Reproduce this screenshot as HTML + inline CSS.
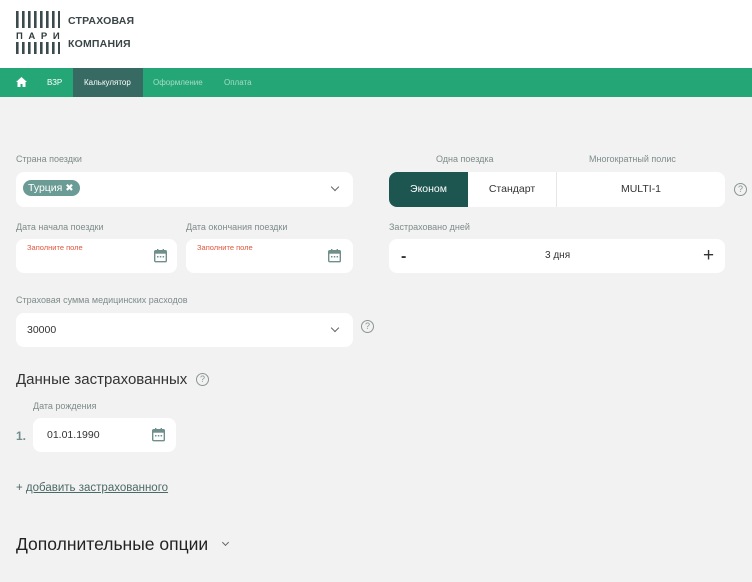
<!DOCTYPE html>
<html><head><meta charset="utf-8"><style>
*{box-sizing:border-box;margin:0;padding:0}
body{width:752px;height:582px;overflow:hidden;background:#f2f2f2;font-family:"Liberation Sans","DejaVu Sans",sans-serif;position:relative;color:#333}
.a{position:absolute}
.hdr{left:0;top:0;width:752px;height:68px;background:#fff}
.nav{left:0;top:68px;width:752px;height:29px;background:#25a676}
.nav span{position:absolute;top:10px;font-size:8px;color:#fff}
.lbl{font-size:9px;color:#7d8c8a}
.box{background:#fff;border-radius:8px}
.err{font-size:7.5px;color:#e0573e}
.q{width:13px;height:13px;border:1.2px solid #8a9593;border-radius:50%;font-size:9px;color:#8a9593;text-align:center;line-height:11px}
.chev{width:6px;height:6px;border-right:1.2px solid #666;border-bottom:1.2px solid #666;transform:rotate(45deg)}
</style></head><body>
<div class="a hdr"></div>
<svg class="a" style="left:16px;top:11px" width="44" height="43">
<g fill="#3b4a4d">
<rect x="0" y="0" width="2.6" height="17"/><rect x="6" y="0" width="2.6" height="17"/><rect x="12" y="0" width="2.6" height="17"/><rect x="18" y="0" width="2.6" height="17"/><rect x="24" y="0" width="2.6" height="17"/><rect x="30" y="0" width="2.6" height="17"/><rect x="36" y="0" width="2.6" height="17"/><rect x="42" y="0" width="2" height="17"/>
<rect x="0" y="31" width="2.6" height="12"/><rect x="6" y="31" width="2.6" height="12"/><rect x="12" y="31" width="2.6" height="12"/><rect x="18" y="31" width="2.6" height="12"/><rect x="24" y="31" width="2.6" height="12"/><rect x="30" y="31" width="2.6" height="12"/><rect x="36" y="31" width="2.6" height="12"/><rect x="42" y="31" width="2" height="12"/>
</g>
<text x="0" y="28" font-size="9.5" font-weight="bold" fill="#2f3b3e" letter-spacing="5.6" font-family="Liberation Sans">ПАРИ</text>
</svg>
<div class="a" style="left:68px;top:15px;font-size:10.5px;font-weight:bold;color:#3b4447;letter-spacing:.2px">СТРАХОВАЯ</div>
<div class="a" style="left:68px;top:38px;font-size:10.5px;font-weight:bold;color:#3b4447;letter-spacing:.2px">КОМПАНИЯ</div>
<div class="a nav">
<svg style="position:absolute;left:16px;top:9px" width="11" height="10"><path d="M5.5 0L0 5h1.5v5h3V7h2v3h3V5H11z" fill="#fff"/></svg>
<span style="left:47px">ВЗР</span>
<div style="position:absolute;left:73px;top:0;width:70px;height:29px;background:#366a62"></div>
<span style="left:84px">Калькулятор</span>
<span style="left:153px;color:#a6dcc6">Оформление</span>
<span style="left:224px;color:#a6dcc6">Оплата</span>
</div>

<div class="a lbl" style="left:16px;top:154px">Страна поездки</div>
<div class="a box" style="left:16px;top:172px;width:337px;height:35px"></div>
<div class="a" style="left:23px;top:180px;width:57px;height:16px;background:#6b9b95;border-radius:8px;color:#fff;font-size:10.5px;line-height:16px;padding-left:5px">Турция <b style="font-size:10px">✖</b></div>
<div class="a chev" style="left:332px;top:184px"></div>

<div class="a lbl" style="left:16px;top:222px">Дата начала поездки</div>
<div class="a lbl" style="left:186px;top:222px">Дата окончания поездки</div>
<div class="a box" style="left:16px;top:239px;width:161px;height:34px"></div>
<div class="a box" style="left:186px;top:239px;width:167px;height:34px"></div>
<div class="a err" style="left:27px;top:243px">Заполните поле</div>
<div class="a err" style="left:197px;top:243px">Заполните поле</div>

<svg width="0" height="0" style="position:absolute"><defs><g id="cal"><rect x="0.7" y="1.7" width="11.6" height="11" rx="1" fill="none" stroke="#6e8f8b" stroke-width="1.4"/><rect x="0.7" y="1.7" width="11.6" height="3" fill="#6e8f8b"/><rect x="3" y="0" width="1.4" height="3" fill="#6e8f8b"/><rect x="8.6" y="0" width="1.4" height="3" fill="#6e8f8b"/><rect x="3" y="7" width="1.5" height="1.5" fill="#6e8f8b"/><rect x="5.8" y="7" width="1.5" height="1.5" fill="#6e8f8b"/><rect x="8.6" y="7" width="1.5" height="1.5" fill="#6e8f8b"/></g></defs></svg>
<svg class="a" style="left:154px;top:249px" width="14" height="14"><use href="#cal"/></svg>
<svg class="a" style="left:328px;top:249px" width="14" height="14"><use href="#cal"/></svg>

<div class="a lbl" style="left:436px;top:154px">Одна поездка</div>
<div class="a lbl" style="left:589px;top:154px">Многократный полис</div>
<div class="a box" style="left:389px;top:172px;width:336px;height:35px"></div>
<div class="a" style="left:389px;top:172px;width:79px;height:35px;background:#1d5650;border-radius:8px 0 0 8px;color:#fff;font-size:10.5px;text-align:center;line-height:35px">Эконом</div>
<div class="a" style="left:468px;top:172px;width:89px;height:35px;font-size:10.5px;text-align:center;line-height:35px;border-right:1px solid #e6e6e6">Стандарт</div>
<div class="a" style="left:557px;top:172px;width:168px;height:35px;font-size:10.5px;text-align:center;line-height:35px">MULTI-1</div>
<div class="a q" style="left:734px;top:183px">?</div>

<div class="a lbl" style="left:389px;top:222px">Застраховано дней</div>
<div class="a box" style="left:389px;top:239px;width:336px;height:34px"></div>
<div class="a" style="left:401px;top:248px;font-size:16px;font-weight:bold;color:#333">-</div>
<div class="a" style="left:545px;top:250px;font-size:10px">3 дня</div>
<div class="a" style="left:703px;top:245px;font-size:19px;color:#333">+</div>

<div class="a lbl" style="left:16px;top:295px">Страховая сумма медицинских расходов</div>
<div class="a box" style="left:16px;top:313px;width:337px;height:34px"></div>
<div class="a" style="left:27px;top:324px;font-size:10.5px">30000</div>
<div class="a chev" style="left:332px;top:325px"></div>
<div class="a q" style="left:361px;top:320px">?</div>

<div class="a" style="left:16px;top:371px;font-size:15px;color:#333">Данные застрахованных</div>
<div class="a q" style="left:196px;top:373px">?</div>
<div class="a lbl" style="left:33px;top:401px">Дата рождения</div>
<div class="a" style="left:16px;top:429px;font-size:12px;font-weight:bold;color:#6e8f8b">1.</div>
<div class="a box" style="left:33px;top:418px;width:143px;height:34px"></div>
<div class="a" style="left:47px;top:429px;font-size:10.5px">01.01.1990</div>
<svg class="a" style="left:152px;top:428px" width="14" height="14"><use href="#cal"/></svg>

<div class="a" style="left:16px;top:482px;font-size:11.5px;color:#4b6a66">+ <span style="text-decoration:underline">добавить застрахованного</span></div>
<div class="a" style="left:16px;top:534px;font-size:17.5px;color:#222">Дополнительные опции</div>
<div class="a" style="left:223px;top:540px;width:5px;height:5px;border-right:1.2px solid #666;border-bottom:1.2px solid #666;transform:rotate(45deg)"></div>
</body></html>
